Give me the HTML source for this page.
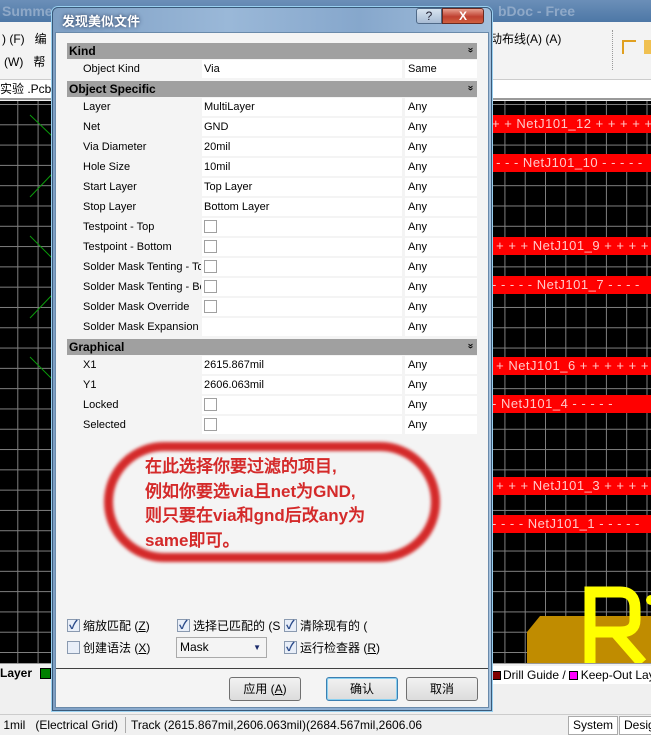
<!DOCTYPE html>
<html><head><meta charset="utf-8"><style>
*{margin:0;padding:0;box-sizing:border-box}
body{width:651px;height:734px;overflow:hidden;position:relative;background:#f0f0f0;font-family:"Liberation Sans","Noto Sans CJK SC",sans-serif;font-size:12px;color:#000}
.abs{position:absolute}
.pcb{background-color:#000;background-image:linear-gradient(#808080 1px,transparent 1px),linear-gradient(90deg,#808080 1px,transparent 1px);background-size:20.3px 20.3px;background-position:0 3px,-3px 0}
.red{position:absolute;left:492px;width:159px;height:18px;background:#ff0000;color:#ffc8c8;font-size:13px;line-height:18px;white-space:nowrap;overflow:hidden;letter-spacing:.5px}
.hdr{position:absolute;left:67px;width:410px;height:16px;background:#a0a0a0;font-weight:bold;font-size:12px;line-height:16px;padding-left:2px}
.hdr:after{content:"»";position:absolute;right:4px;top:-1px;transform:rotate(90deg);font-size:10px}
.row{position:absolute;left:67px;width:410px;height:19px;font-size:11px;line-height:19px}
.row .l{position:absolute;left:16px;width:118px;overflow:hidden;white-space:nowrap}
.row .v{position:absolute;left:135px;width:200px;height:18px;background:#fff;padding-left:2px}
.row .a{position:absolute;left:338px;width:72px;height:18px;background:#fff;padding-left:3px}
.cb{display:inline-block;width:13px;height:13px;border:1px solid #a0a0a0;background:#fff;vertical-align:middle;margin-top:-2px}
.ck{position:absolute;font-size:12px;line-height:14px;white-space:nowrap}
.ck .cb{background:#e8eef8;border-color:#8a9ab0;position:relative;margin-right:3px}
.ck .cb.on:after{content:"✓";position:absolute;left:1px;top:-2px;font-size:12px;color:#2a4a8a;font-weight:bold}
.btn{position:absolute;top:677px;height:24px;width:72px;border:1px solid #707070;border-radius:3px;background:linear-gradient(#f2f2f2,#dcdcdc);text-align:center;line-height:22px;font-size:12px}
</style></head><body>
<div class="abs" style="left:0;top:0;width:651px;height:22px;background:linear-gradient(#6b8fb8,#4d77a6);color:#8fa9c8;font-size:14px;line-height:22px;font-weight:bold;padding-left:2px">Summer<span style="position:absolute;left:498px">bDoc - Free Documents</span></div>
<div class="abs" style="left:0;top:22px;width:651px;height:58px;background:#f3f3f3;border-bottom:1px solid #ccc"></div>
<div class="abs" style="left:2px;top:30px;font-size:12px">) (F)&nbsp;&nbsp;&nbsp;编</div>
<div class="abs" style="left:4px;top:53px;font-size:12px">(W)&nbsp;&nbsp;&nbsp;帮</div>
<div class="abs" style="left:490px;top:30px;font-size:12px">动布线(A) (A)</div>
<div class="abs" style="left:612px;top:30px;width:1px;height:40px;border-left:1px dotted #999"></div>
<div class="abs" style="left:622px;top:40px;width:14px;height:14px;border:2px solid #e0a020;border-right:none;border-bottom:none"></div>
<div class="abs" style="left:644px;top:40px;width:7px;height:14px;background:#f0c050"></div>
<div class="abs" style="left:0;top:80px;width:651px;height:20px;background:#fff;border-bottom:2px solid #999;font-size:12px;line-height:18px">实验 .PcbDo</div>
<div class="abs pcb" style="left:0;top:101px;width:651px;height:562px"></div>
<svg class="abs" style="left:0;top:101px" width="60" height="560"><g stroke="#0a9a0a" stroke-width="1"><line x1="30" y1="14" x2="52" y2="35"/><line x1="30" y1="96" x2="52" y2="73"/><line x1="30" y1="135" x2="52" y2="157"/><line x1="30" y1="217" x2="52" y2="194"/><line x1="30" y1="256" x2="52" y2="278"/></g></svg>
<div class="red" style="top:115px">+ + NetJ101_12 + + + + +</div>
<div class="red" style="top:154px">&nbsp;- - - NetJ101_10 - - - - -</div>
<div class="red" style="top:237px">&nbsp;+ + + NetJ101_9 + + + +</div>
<div class="red" style="top:276px">- - - - - NetJ101_7 - - - -</div>
<div class="red" style="top:357px">&nbsp;+ NetJ101_6 + + + + + +</div>
<div class="red" style="top:395px">- NetJ101_4 - - - - -</div>
<div class="red" style="top:477px">&nbsp;+ + + NetJ101_3 + + + +</div>
<div class="red" style="top:515px">- - - - NetJ101_1 - - - - -</div>
<svg class="abs" style="left:520px;top:580px" width="131" height="83"><polygon points="20,36 131,36 131,83 7,83 7,52" fill="#c08c00"/><path d="M70,83 V12 H100 Q115,12 115,28 V40 Q115,52 100,52 H70 M95,52 L122,83" stroke="#ffff00" stroke-width="11" fill="none"/><circle cx="131" cy="20" r="5" fill="#ffff00"/></svg>
<div class="abs" style="left:0;top:663px;width:651px;height:22px;background:#f0f0f0;border-top:1px solid #999"></div>
<div class="abs" style="left:0;top:666px;font-weight:bold;font-size:12px">Layer</div>
<div class="abs" style="left:40px;top:668px;width:11px;height:11px;background:#008000;border:1px solid #000"></div>
<div class="abs" style="left:492px;top:666px;width:159px;height:18px;background:#fff;font-size:12px;line-height:18px;white-space:nowrap"><span class="cb" style="width:9px;height:9px;background:#800000;border-color:#000;margin:0 2px 0 0"></span>Drill Guide /<span class="cb" style="width:9px;height:9px;background:#ff00ff;border-color:#000;margin:0 3px 0 3px"></span>Keep-Out Layer</div>
<div class="abs" style="left:0;top:685px;width:651px;height:29px;background:#f0f0f0"></div>
<div class="abs" style="left:0;top:714px;width:651px;height:20px;background:#f0f0f0;border-top:1px solid #ccc;font-size:12px;line-height:20px;white-space:nowrap">&nbsp;1mil&nbsp;&nbsp;&nbsp;(Electrical Grid)<span style="position:absolute;left:125px;top:2px;height:16px;border-left:1px solid #aaa"></span><span style="position:absolute;left:131px">Track (2615.867mil,2606.063mil)(2684.567mil,2606.06</span><span style="position:absolute;left:568px;top:1px;width:50px;height:19px;border:1px solid #aaa;background:#fff;text-align:center;line-height:17px">System</span><span style="position:absolute;left:619px;top:1px;width:40px;height:19px;border:1px solid #aaa;background:#fff;line-height:17px;padding-left:4px">Desig</span></div>
<div class="abs" style="left:52px;top:7px;width:440px;height:704px;border-radius:6px 6px 0 0;background:linear-gradient(90deg,#7e9fc4,#9ab8d8 40%,#86a7cc 70%,#a4c0dc);border:1px solid #3a5a7a;box-shadow:0 0 0 1px #9ad0f0"></div>
<div class="abs" style="left:62px;top:11px;color:#fff;font-weight:bold;font-size:13px;text-shadow:0 0 4px #203050">发现美似文件</div>
<div class="abs" style="left:416px;top:8px;width:26px;height:16px;border:1px solid #506a88;border-radius:3px 0 0 3px;background:linear-gradient(#d8e4f0,#a8bcd4);text-align:center;font-size:12px;line-height:14px;color:#223">?</div>
<div class="abs" style="left:442px;top:8px;width:42px;height:16px;border:1px solid #6a2a20;border-radius:0 3px 3px 0;background:linear-gradient(#e8a090,#c04030 55%,#d06040);text-align:center;color:#fff;font-weight:bold;font-size:12px;line-height:14px">X</div>
<div class="abs" style="left:55px;top:32px;width:434px;height:676px;background:#f4f4f4;border:1px solid #6a8aaa"></div>
<div class="hdr" style="top:43px">Kind</div>
<div class="row" style="top:60px"><span class="l">Object Kind</span><span class="v">Via</span><span class="a">Same</span></div>
<div class="hdr" style="top:81px">Object Specific</div>
<div class="row" style="top:98px"><span class="l">Layer</span><span class="v">MultiLayer</span><span class="a">Any</span></div>
<div class="row" style="top:118px"><span class="l">Net</span><span class="v">GND</span><span class="a">Any</span></div>
<div class="row" style="top:138px"><span class="l">Via Diameter</span><span class="v">20mil</span><span class="a">Any</span></div>
<div class="row" style="top:158px"><span class="l">Hole Size</span><span class="v">10mil</span><span class="a">Any</span></div>
<div class="row" style="top:178px"><span class="l">Start Layer</span><span class="v">Top Layer</span><span class="a">Any</span></div>
<div class="row" style="top:198px"><span class="l">Stop Layer</span><span class="v">Bottom Layer</span><span class="a">Any</span></div>
<div class="row" style="top:218px"><span class="l">Testpoint - Top</span><span class="v"><span class="cb"></span></span><span class="a">Any</span></div>
<div class="row" style="top:238px"><span class="l">Testpoint - Bottom</span><span class="v"><span class="cb"></span></span><span class="a">Any</span></div>
<div class="row" style="top:258px"><span class="l">Solder Mask Tenting - To</span><span class="v"><span class="cb"></span></span><span class="a">Any</span></div>
<div class="row" style="top:278px"><span class="l">Solder Mask Tenting - Bo</span><span class="v"><span class="cb"></span></span><span class="a">Any</span></div>
<div class="row" style="top:298px"><span class="l">Solder Mask Override</span><span class="v"><span class="cb"></span></span><span class="a">Any</span></div>
<div class="row" style="top:318px"><span class="l">Solder Mask Expansion</span><span class="v"></span><span class="a">Any</span></div>
<div class="hdr" style="top:339px">Graphical</div>
<div class="row" style="top:356px"><span class="l">X1</span><span class="v">2615.867mil</span><span class="a">Any</span></div>
<div class="row" style="top:376px"><span class="l">Y1</span><span class="v">2606.063mil</span><span class="a">Any</span></div>
<div class="row" style="top:396px"><span class="l">Locked</span><span class="v"><span class="cb"></span></span><span class="a">Any</span></div>
<div class="row" style="top:416px"><span class="l">Selected</span><span class="v"><span class="cb"></span></span><span class="a">Any</span></div>
<div class="abs" style="left:104px;top:442px;width:336px;height:120px;border:9px solid #d42a2a;border-radius:60px;filter:blur(1.5px)"></div>
<div class="abs" style="left:145px;top:455px;color:#d42a2a;font-weight:bold;font-size:17px;line-height:24.5px;font-family:'Liberation Sans','WenQuanYi Zen Hei',sans-serif;white-space:nowrap">在此选择你要过滤的项目,<br>例如你要选via且net为GND,<br>则只要在via和gnd后改any为<br>same即可。</div>
<div class="ck" style="left:67px;top:619px"><span class="cb on"></span>缩放匹配 (<u>Z</u>)</div>
<div class="ck" style="left:177px;top:619px"><span class="cb on"></span>选择已匹配的 (S</div>
<div class="ck" style="left:284px;top:619px"><span class="cb on"></span>清除现有的 (</div>
<div class="ck" style="left:67px;top:641px"><span class="cb"></span>创建语法 (<u>X</u>)</div>
<div class="abs" style="left:176px;top:637px;width:91px;height:21px;border:1px solid #aaa;background:#f4f4f4;font-size:12px;line-height:19px;padding-left:3px">Mask<span style="position:absolute;right:5px;top:0;font-size:8px;color:#1a2a6a">▼</span></div>
<div class="ck" style="left:284px;top:641px"><span class="cb on"></span>运行检查器 (<u>R</u>)</div>
<div class="abs" style="left:56px;top:668px;width:432px;height:1px;background:#404040"></div>
<div class="btn" style="left:229px">应用 (<u>A</u>)</div>
<div class="btn" style="left:326px;border-color:#3c7fb1;box-shadow:inset 0 0 0 1px #8ad0f0">确认</div>
<div class="btn" style="left:406px">取消</div>
</body></html>
